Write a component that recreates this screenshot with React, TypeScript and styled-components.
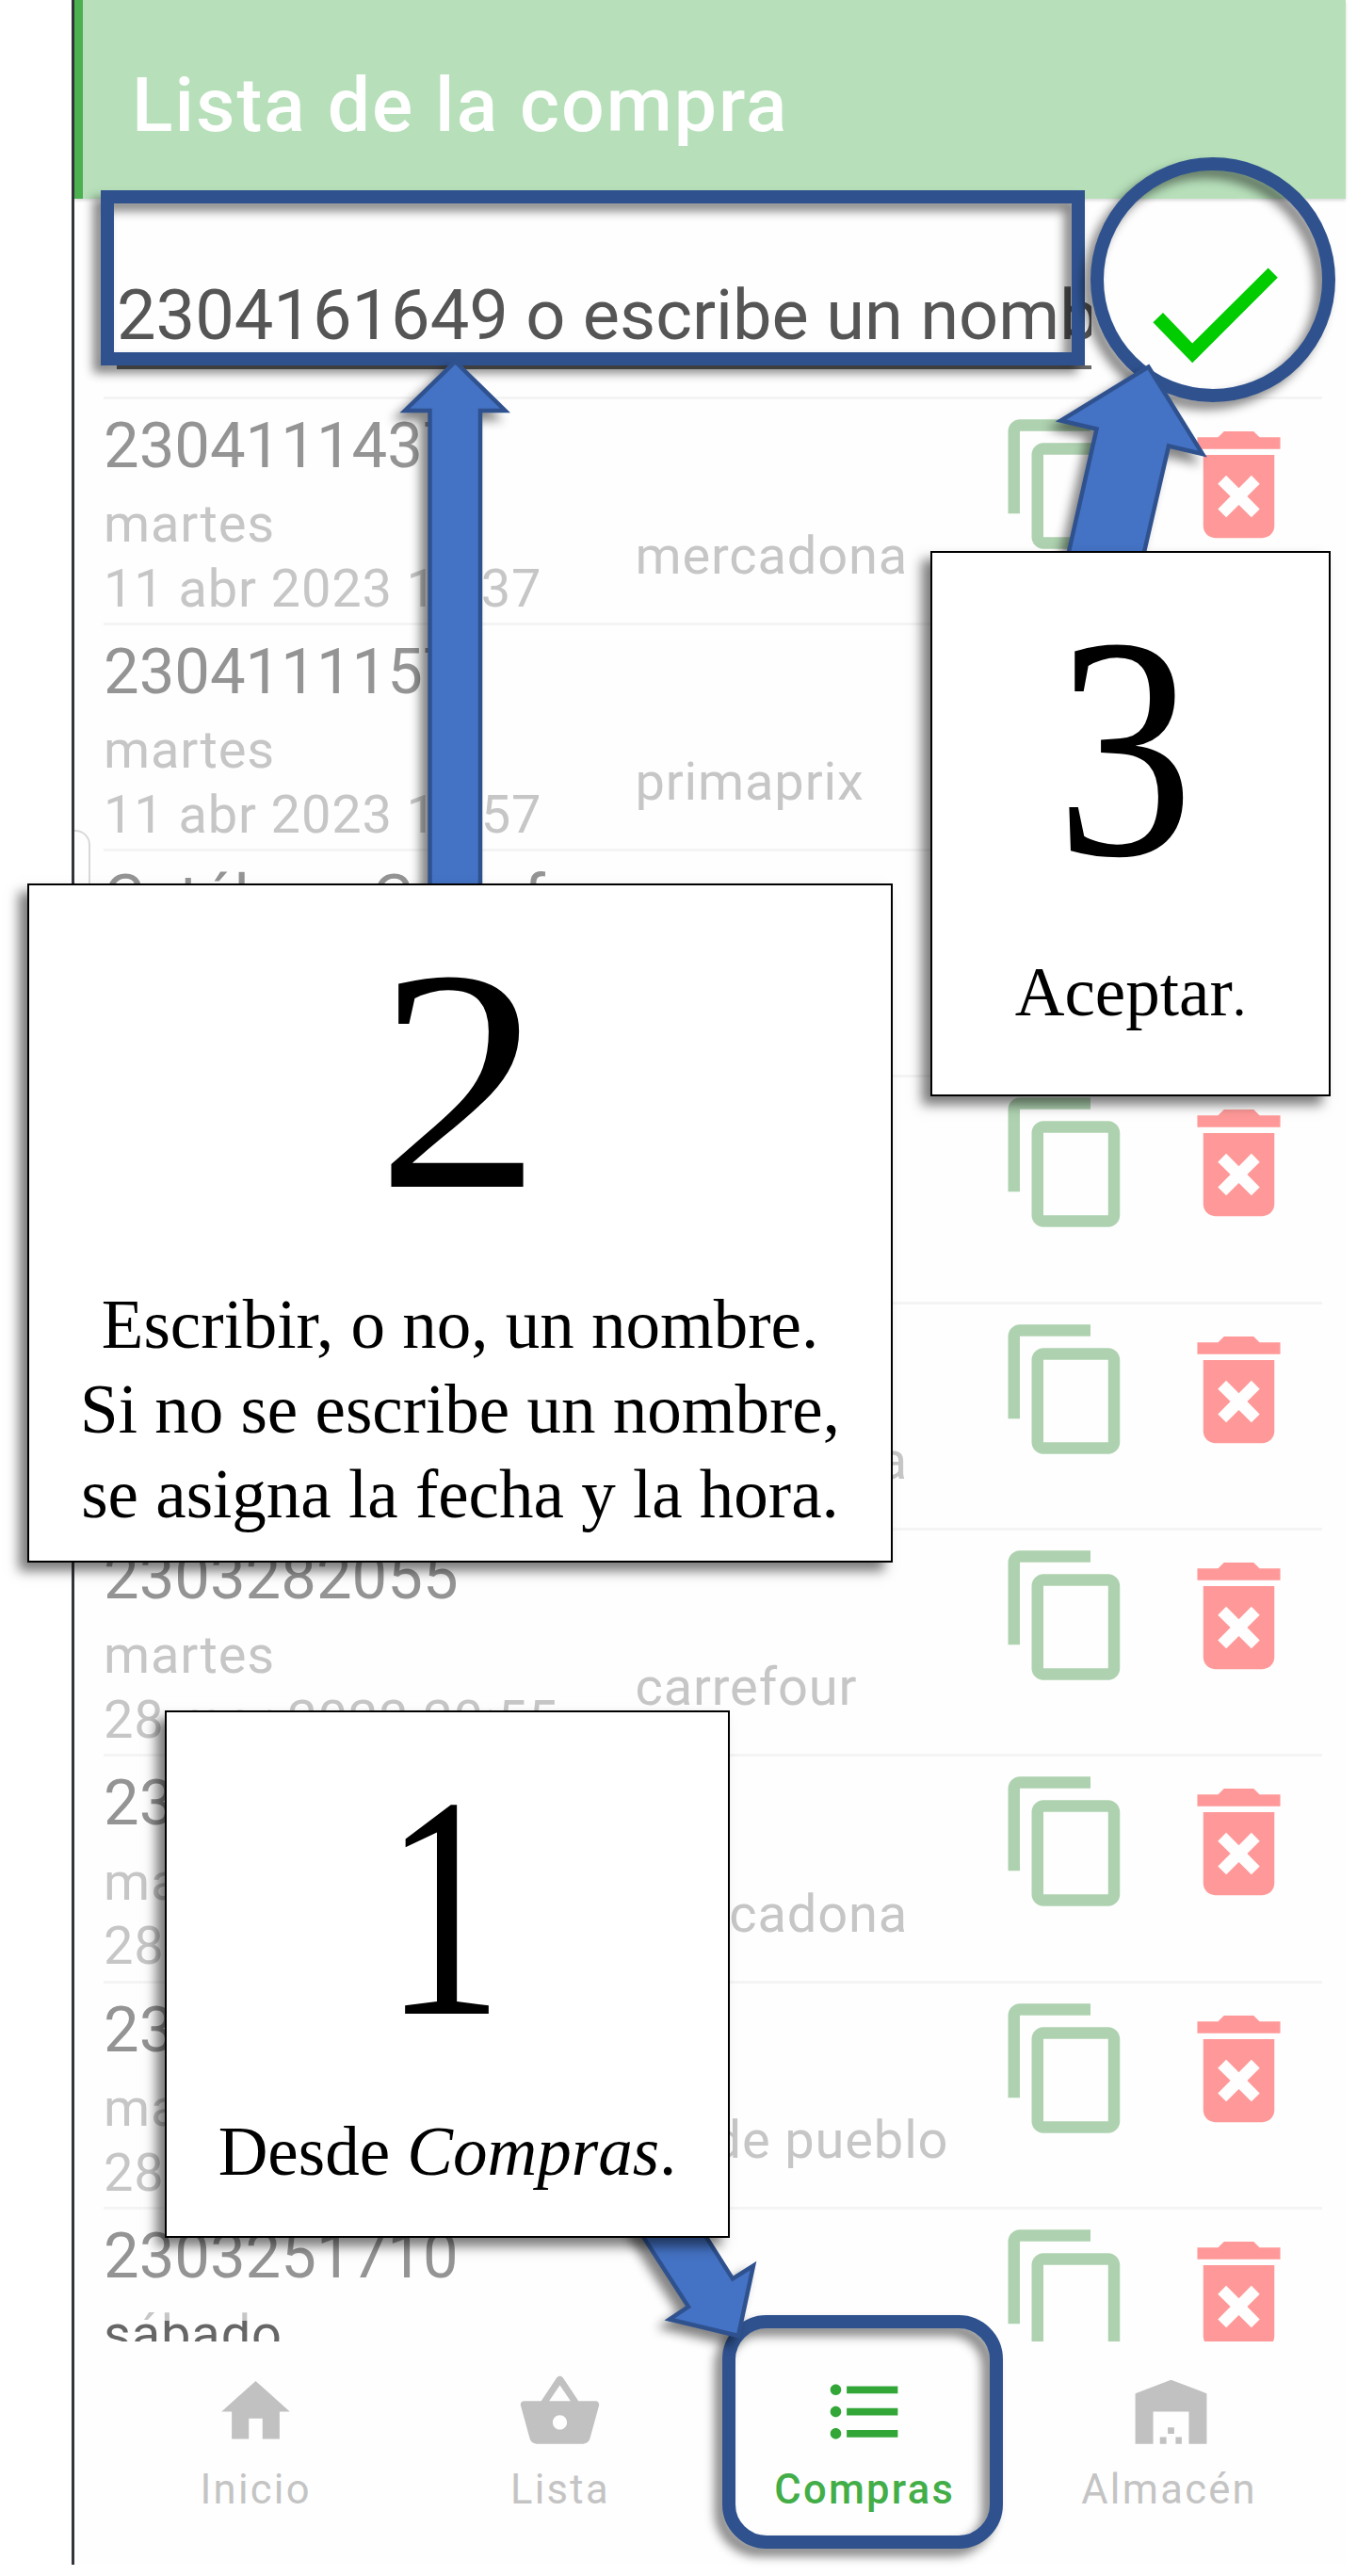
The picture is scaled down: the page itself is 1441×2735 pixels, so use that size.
import React from "react";
import styled, { createGlobalStyle } from "styled-components";

const GlobalStyle = createGlobalStyle`
  * { box-sizing: border-box; }
  body { margin: 0; background: #fff; }
`;

const INK = "#2f528f";
const ARROW = "#4472c4";
const SHADOW = "drop-shadow(-8px 8px 5.5px rgba(0, 0, 0, 0.48))";

const Stage = styled.main`
  position: relative;
  width: 1441px;
  height: 2735px;
  overflow: hidden;
  background: #fff;
  font-family: Roboto, "Liberation Sans", sans-serif;
`;

/* ---------- phone screen ---------- */

const Phone = styled.section`
  display: flex;
  flex-direction: column;
  width: 1353px;
  height: 2723px;
  margin-left: 76px;
  border-left: 3px solid #33363a;
  background: #fefefe;
`;

const Header = styled.header`
  height: 211px;
  flex: none;
  padding: 62px 0 0 52px;
  border-left: 9px solid #4caf50;
  background: #b7e0ba;
  box-shadow: 0 2px 3px rgba(0, 0, 0, 0.14);
`;

const Title = styled.h1`
  margin: 0;
  font-size: 80.5px;
  line-height: 100px;
  font-weight: 500;
  letter-spacing: 2px;
  color: #fff;
`;

const Form = styled.div`
  display: flex;
  flex: none;
  height: 209.5px;
  padding-left: 45px;
`;

const Field = styled.div`
  width: 1035px;
  height: 181px;
  padding-top: 79px;
  border-bottom: 4px solid #666;
  overflow: hidden;
  white-space: nowrap;
  font-size: 74px;
  line-height: 90px;
  color: #555;
`;

const Accept = styled.div`
  padding: 73px 0 0 65px;
`;

const List = styled.div`
  flex: none;
  height: 2065px;
  padding: 0 25px 0 31px;
  overflow: hidden;
`;

const Row = styled.article`
  display: grid;
  grid-template-columns: 564.5px 383px 182.5px 1fr;
  height: 240.3px;
  border-top: 3px solid #f4f4f4;
`;

const Info = styled.div`
  padding-top: 10px;
`;

const Name = styled.div`
  height: 88.5px;
  font-size: 67px;
  line-height: 78px;
  white-space: nowrap;
  color: #949494;
`;

const Meta = styled.div<{ $cut?: boolean }>`
  font-size: 56px;
  line-height: 68.6px;
  letter-spacing: 0.85px;
  white-space: nowrap;
  color: #c6c6c6;
  ${(p) =>
    p.$cut &&
    `color: transparent;
     background: linear-gradient(#c6c6c6 0 20px, #666 20px);
     background-clip: text;
     -webkit-background-clip: text;`}
`;

const Shop = styled(Meta)<{ $indent?: number }>`
  padding-top: 132.5px;
  padding-left: ${(p) => p.$indent ?? 0}px;
`;

const IconCell = styled.div<{ $color: string }>`
  padding-top: 15px;
  color: ${(p) => p.$color};
`;

const Tabs = styled.nav`
  display: grid;
  grid-template-columns: repeat(4, 323.3px);
  flex: 1;
  padding: 24.5px 0 0 31px;
`;

const Tab = styled.div<{ $active?: boolean }>`
  display: flex;
  flex-direction: column;
  align-items: center;
  font-size: 43.5px;
  line-height: 60px;
  letter-spacing: 2.3px;
  font-weight: ${(p) => (p.$active ? 500 : 400)};
  color: ${(p) => (p.$active ? "#43ae48" : "#c4c4c4")};
`;

const TabIcon = styled.div<{ $color: string; $nudge?: number }>`
  display: flex;
  align-items: center;
  height: 101px;
  margin-bottom: 3px;
  padding-left: ${(p) => p.$nudge ?? 0}px;
  color: ${(p) => p.$color};
`;

const Glyph = ({ d, size }: { d: string; size: number }) => (
  <svg width={size} height={size} viewBox="0 0 24 24" fill="currentColor" display="block">
    <path d={d} />
  </svg>
);

const icons = {
  copy: "M16 1H4c-1.1 0-2 .9-2 2v14h2V3h12V1zm3 4H8c-1.1 0-2 .9-2 2v14c0 1.1.9 2 2 2h11c1.1 0 2-.9 2-2V7c0-1.1-.9-2-2-2zm0 16H8V7h11v14z",
  trash:
    "M6 19c0 1.1.9 2 2 2h8c1.1 0 2-.9 2-2V7H6v12zm2.46-7.12l1.41-1.41L12 12.59l2.12-2.12 1.41 1.41L13.41 14l2.12 2.12-1.41 1.41L12 15.41l-2.12 2.12-1.41-1.41L10.59 14l-2.13-2.12zM15.5 4l-1-1h-5l-1 1H5v2h14V4z",
  home: "M10 20v-6h4v6h5v-8h3L12 3 2 12h3v8z",
  basket:
    "M17.21 9l-4.38-6.56c-.19-.28-.51-.42-.83-.42-.32 0-.64.14-.83.43L6.79 9H2c-.55 0-1 .45-1 1 0 .09.01.18.04.27l2.54 9.27c.23.84 1 1.46 1.92 1.46h13c.92 0 1.69-.62 1.93-1.46l2.54-9.27L23 10c0-.55-.45-1-1-1h-4.79zM9 9l3-4.4L15 9H9zm3 8c-1.1 0-2-.9-2-2s.9-2 2-2 2 .9 2 2-.9 2-2 2z",
  list: "M4 10.5c-.83 0-1.5.67-1.5 1.5s.67 1.5 1.5 1.5 1.5-.67 1.5-1.5-.67-1.5-1.5-1.5zm0-6c-.83 0-1.5.67-1.5 1.5S3.17 7.5 4 7.5 5.5 6.83 5.5 6 4.83 4.5 4 4.5zm0 12c-.83 0-1.5.68-1.5 1.5s.68 1.5 1.5 1.5 1.5-.68 1.5-1.5-.67-1.5-1.5-1.5zM7 19h14v-2H7v2zm0-6h14v-2H7v2zm0-8v2h14V5H7z",
  store:
    "M22 21V6.9L12 3.1 2 6.9V21h5v-9h10v9zM10.7 19.1H8.9v1.9h1.8zM12.9 16.4h-1.8v1.8h1.8zM15 19.1h-1.7v1.9H15z",
};

type Purchase = {
  name: string;
  day: string;
  date: string;
  shop: string;
  indent?: number;
  cut?: boolean;
};

const purchases: Purchase[] = [
  { name: "2304111437", day: "martes", date: "11 abr 2023 14:37", shop: "mercadona" },
  { name: "2304111157", day: "martes", date: "11 abr 2023 11:57", shop: "primaprix" },
  { name: "Catálogo Carrefour", day: "", date: "", shop: "" },
  { name: "", day: "", date: "", shop: "" },
  { name: "", day: "", date: "", shop: "mercadona" },
  { name: "2303282055", day: "martes", date: "28 mar 2023 20:55", shop: "carrefour" },
  { name: "2303282000", day: "martes", date: "28 mar 2023 20:00", shop: "mercadona" },
  { name: "2303281900", day: "martes", date: "28 mar 2023 19:00", shop: "La de pueblo", indent: 4 },
  { name: "2303251710", day: "sábado", date: "", shop: "", cut: true },
];

/* ---------- annotations laid over the screen ---------- */

const EdgeHandle = styled.div`
  position: absolute;
  left: 79px;
  top: 881px;
  width: 17px;
  height: 300px;
  border: 2px solid #d8d8d8;
  border-left: 0;
  border-radius: 0 16px 16px 0;
`;

const Ring = styled.div<{ $x: number; $y: number; $w: number; $h: number; $r?: string }>`
  position: absolute;
  left: ${(p) => p.$x}px;
  top: ${(p) => p.$y}px;
  width: ${(p) => p.$w}px;
  height: ${(p) => p.$h}px;
  border: 14px solid ${INK};
  border-radius: ${(p) => p.$r ?? "0"};
  filter: ${SHADOW};
`;

const Arrows = styled.svg`
  position: absolute;
  inset: 0;
  overflow: visible;
`;

const Arrow = styled.polygon`
  fill: ${ARROW};
  stroke: ${INK};
  stroke-width: 4.5px;
  stroke-linejoin: miter;
  filter: ${SHADOW};
`;

const Card = styled.div<{ $x: number; $y: number; $w: number; $h: number }>`
  position: absolute;
  left: ${(p) => p.$x}px;
  top: ${(p) => p.$y}px;
  width: ${(p) => p.$w}px;
  height: ${(p) => p.$h}px;
  padding-top: 42px;
  border: 2px solid #000;
  background: #fff;
  box-shadow: -9px 9px 12px rgba(0, 0, 0, 0.52);
  text-align: center;
  font-family: "Liberation Serif", serif;
  color: #000;
`;

const Step = styled.div<{ $shift?: number; $stretch: number }>`
  font-size: 336px;
  line-height: 330px;
  margin-bottom: 50px;
  transform: translateX(${(p) => p.$shift ?? 0}px) scaleX(${(p) => p.$stretch});
`;

const Note = styled.p`
  margin: 0;
  font-size: 73px;
  line-height: 90px;
  white-space: nowrap;
`;

const SmallStop = styled.span`
  font-size: 0.8em;
  line-height: 0;
`;

export default function App() {
  return (
    <Stage>
      <GlobalStyle />
      <Phone>
        <Header>
          <Title>Lista de la compra</Title>
        </Header>
        <Form>
          <Field>2304161649 o escribe un nombre</Field>
          <Accept>
            <svg width="134" height="102" viewBox="1224 284 134 102" display="block">
              <polygon
                fill="#00cc00"
                points="1224.4,342.3 1235,332 1266.2,364.5 1346.7,284.5 1356.8,294.7 1266.2,385.3"
              />
            </svg>
          </Accept>
        </Form>
        <List>
          {purchases.map((p, i) => (
            <Row key={i}>
              <Info>
                <Name>{p.name}</Name>
                <Meta $cut={p.cut}>{p.day}</Meta>
                <Meta>{p.date}</Meta>
              </Info>
              <Shop $indent={p.indent}>{p.shop}</Shop>
              <IconCell $color="#aed2b0">
                <Glyph d={icons.copy} size={150} />
              </IconCell>
              <IconCell $color="#ff9999">
                <Glyph d={icons.trash} size={151} />
              </IconCell>
            </Row>
          ))}
        </List>
        <Tabs>
          <Tab>
            <TabIcon $color="#c1c1c1">
              <Glyph d={icons.home} size={87} />
            </TabIcon>
            Inicio
          </Tab>
          <Tab>
            <TabIcon $color="#c1c1c1">
              <Glyph d={icons.basket} size={91} />
            </TabIcon>
            Lista
          </Tab>
          <Tab $active>
            <TabIcon $color="#33a638">
              <Glyph d={icons.list} size={93} />
            </TabIcon>
            Compras
          </Tab>
          <Tab>
            <TabIcon $color="#c1c1c1" $nudge={3}>
              <Glyph d={icons.store} size={91} />
            </TabIcon>
            Almacén
          </Tab>
        </Tabs>
      </Phone>

      <EdgeHandle />
      <Ring $x={107} $y={202} $w={1045} $h={186} />
      <Ring $x={1158} $y={167} $w={260} $h={260} $r="50%" />
      <Ring $x={767} $y={2458} $w={298} $h={248} $r="47px" />
      <Arrows width="1441" height="2735" viewBox="0 0 1441 2735">
        <Arrow points="483.5,384 536.5,436 510,436 510,960 456.5,960 456.5,436 430,436" />
        <Arrow points="1219.5,389.5 1277,482 1241,473.5 1209.5,610 1129.5,610 1164.5,455.5 1126.5,446.5" />
        <Arrow points="784,2480 711,2462.5 731,2449 667,2350 734,2350 778,2419.5 800,2405.5" />
      </Arrows>
      <Card $x={29} $y={938} $w={919} $h={721}>
        <Step $shift={-1} $stretch={1.04}>2</Step>
        <Note>
          Escribir, o no, un nombre.
          <br />
          Si no se escribe un nombre,
          <br />
          se asigna la fecha y la hora.
        </Note>
      </Card>
      <Card $x={988} $y={585} $w={425} $h={579}>
        <Step $shift={-6} $stretch={0.87}>3</Step>
        <Note>
          Aceptar<SmallStop>.</SmallStop>
        </Note>
      </Card>
      <Card $x={175} $y={1816} $w={600} $h={560}>
        <Step $shift={-4} $stretch={0.75}>1</Step>
        <Note>
          Desde <em>Compras</em>.
        </Note>
      </Card>
    </Stage>
  );
}
